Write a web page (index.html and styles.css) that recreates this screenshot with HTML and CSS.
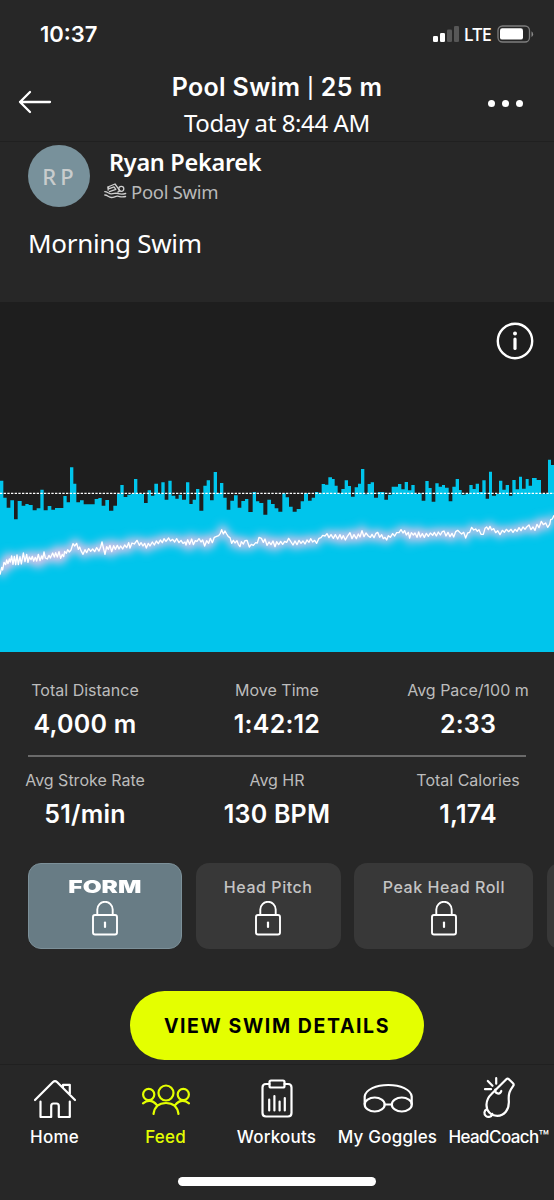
FILE: index.html
```html
<!DOCTYPE html>
<html lang="en">
<head>
    <meta charset="UTF-8">
    <meta name="viewport" content="width=device-width, initial-scale=1.0">
    <title>Pool Swim</title>
    <link rel="stylesheet" href="styles.css">
</head>
<body>
    <div class="status">
        <span class="time">10:37</span>
        <div class="signal">
            <svg width="26" height="16" viewBox="0 0 26 16">
                <rect x="0" y="10" width="5" height="6" rx="1.3" fill="#fff"/>
                <rect x="7" y="7" width="5" height="9" rx="1.3" fill="#fff"/>
                <rect x="14" y="3.5" width="5" height="12.5" rx="1.3" fill="#575757"/>
                <rect x="21" y="0" width="5" height="16" rx="1.3" fill="#575757"/>
            </svg>
            <span class="lte">LTE</span>
            <svg width="37" height="18" viewBox="0 0 37 18">
                <rect x="1" y="1" width="31.500" height="16" rx="4.5" fill="none" stroke="#7d7d7d" stroke-width="1.3"/>
                <rect x="3" y="3.2" width="23" height="11.4" rx="2.2" fill="#fff"/>
                <path d="M34.500 6.3q1.6 1 1.6 2.9t-1.6 2.9z" fill="#8a8a8a"/>
            </svg>
        </div>
    </div>

    <div class="header">
        <svg class="back" width="34" height="24" viewBox="0 0 34 24">
            <path d="M32 12H2M12 2L2 12l10 10" fill="none" stroke="#fff" stroke-width="2.3" stroke-linecap="round" stroke-linejoin="round"/>
        </svg>
        <div class="titles">
            <h1>Pool Swim <span class="bar">|</span> 25 m</h1>
            <p class="date">Today at 8:44 AM</p>
        </div>
        <div class="more"><i></i><i></i><i></i></div>
    </div>

    <div class="profile">
        <div class="user">
            <div class="avatar">RP</div>
            <div class="who">
                <div class="name">Ryan Pekarek</div>
                <div class="sport">
                    <svg width="23" height="16" viewBox="0 0 23 16" fill="none" stroke="#d0d0d0" stroke-width="1.3" stroke-linecap="round" stroke-linejoin="round">
                        <circle cx="17.3" cy="5.8" r="2.5"/>
                        <path d="M4.2 7.2L3.8 4 11 1l5 6.8-2.2 1.3M3.8 4l1.5 1.7L10 3.8l1.8 2.6-6.3 2.3"/>
                        <path d="M.8 8.6c3 0 3.6 2.3 6.6 2.3s3.3-1 5.6-.6 3.5 1.5 8.7.2"/>
                        <path d="M.8 12c3 0 3.6 2.5 6.6 2.5s3.7-1.5 6.2-1.3 3.5 1.5 8 .3"/>
                    </svg>
                    <span>Pool Swim</span>
                </div>
            </div>
        </div>
        <div class="activity">Morning Swim</div>
    </div>

    <div class="chart">
        <svg class="graph" width="554" height="350" viewBox="0 0 1662 1050">
            <defs>
                <filter id="blur" x="-5%" y="-60%" width="110%" height="220%">
                    <feGaussianBlur stdDeviation="13"/>
                </filter>
            </defs>
            <!-- pace bars -->
            <g fill="#00c5ec">
                <path transform="translate(0 444)" d="M0 606V92H10V143H20V173H31V151H42V208H53V153H65V167H76V162H86V165H98V181H110V175H121V119H131V181H143V168H154V179H165V174H190V138H200V157H210V52H220V101H229V157H240V151H251V163H284V147H295V144H305V167H316V150H327V182H340V167H351V131H361V105H371V141H382V134H392V131H402V87H412V131H422V132H432V159H443V121H453V137H463V101H474V131H484V97H494V149H505V92H515V137H526V146H536V134H546V149H556V606z"/>
                <path transform="translate(555 444)" d="M0 606V149H3V97H13V162H23V149H33V117H43V182H55V107H65V91H75V151H86V66H96V129H105V99H115V143H125V179H136V152H147V136H158V173H169V153H180V147H190V186H203V126H213V154H223V159H235V194H247V149H258V162H269V175H280V185H292V130H302V142H312V170H323V185H335V177H347V154H357V130H369V152H380V143H390V126H400V130H410V102H420V104H430V82H441V87H449V107H458V130H469V117H479V91H489V108H498V140H509V112H519V101H528V57H538V133H548V102H553V606z"/>
                <path transform="translate(1107 444)" d="M0 606V102H5V97H15V143H27V126H46V149H57V134H68V110H87V102H97V118H107V96H117V121H127V105H137V132H147V130H158V152H169V93H179V114H188V155H199V100H209V110H219V105H228V113H239V154H250V110H260V87H270V120H278V134H290V131H301V105H311V117H320V101H330V126H340V91H350V146H360V65H369V137H381V132H390V92H400V119H410V105H420V137H430V90H440V118H450V80H459V116H470V87H479V107H489V84H503V90H516V131H537V29H546V45H555V606z"/>
            </g>
            <path d="M0 574H1662" stroke="#fff" stroke-width="3.3" stroke-dasharray="7 4"/>
            <!-- heart rate -->
            <path id="hr" transform="translate(0 444)" fill="none" d="M0 374L5 352 8 360 12 337 17 344 20 330 24 341 28 327 31 336 35 318 39 343 43 319 47 344 51 315 55 344 60 320 64 342 70 309 75 335 80 313 84 337 88 321 93 329 97 319 101 333 106 322 110 333 115 313 120 332 125 318 128 327 132 306 136 324 142 327 147 316 151 324 158 309 163 321 167 308 172 321 177 305 182 325 187 313 191 320 194 304 199 310 203 299 208 306 213 300 219 281 224 288 230 280 235 298 239 291 243 302 249 313 255 299 260 308 266 296 272 304 278 297 284 305 290 293 297 303 302 291 306 276 311 297 315 313 320 290 325 298 330 286 335 305 341 287 346 298 352 286 357 297 362 288 368 297 374 285 380 293 386 278 390 294 396 279 403 282 411 271 418 286 423 278 429 288 434 280 439 294 445 280 450 288 457 276 463 285 469 273 475 281 481 270 487 278 492 266 498 274 506 264 511 273 518 268 524 276 530 266 537 278 543 271 549 280 555 276L558 285 563 269 569 283 575 267 580 284 586 272 591 274 597 266 603 276 608 270 614 288 620 272 626 280 631 265 637 278 643 262 650 259 656 257 661 250 665 239 670 252 675 243 680 252 685 260 690 263 695 280 700 271 705 279 711 272 715 283 720 290 724 275 730 282 735 272 741 271 748 291 754 283 760 286 767 278 772 279 777 262 784 265 790 277 795 267 801 286 807 276 813 284 819 273 825 290 830 275 836 284 842 274 848 283 854 274 860 277 866 265 872 274 879 285 885 273 891 284 897 271 903 280 909 273 915 282 921 270 927 277 932 266 938 276 944 271 950 280 957 265 963 263 968 256 975 258 981 251 987 263 993 254 1000 265 1006 254 1013 267 1020 254 1025 267 1030 257 1036 270 1042 259 1050 248 1056 266 1062 254 1069 266 1075 252 1080 261 1086 242 1092 260 1098 249 1105 258L1111 262 1116 253 1122 263 1128 250 1133 247 1139 262 1145 254 1150 266 1155 262 1160 270 1165 257 1171 262 1178 251 1184 258 1190 248 1197 248 1203 239 1209 249 1214 242 1219 255 1225 247 1229 264 1234 248 1240 255 1245 249 1251 262 1256 246 1261 261 1267 251 1273 262 1279 250 1285 259 1291 249 1298 256 1303 247 1309 258 1315 246 1321 255 1327 245 1332 243 1338 258 1344 247 1350 260 1356 250 1361 261 1367 245 1373 241 1379 247 1385 252 1391 247 1397 264 1403 249 1409 247 1415 232 1421 240 1427 237 1432 244 1437 239 1443 253 1450 253 1455 235 1460 231 1465 239 1470 229 1475 240 1481 236 1487 248 1493 242 1500 254 1507 241 1513 247 1519 238 1526 245 1533 238 1539 247 1545 238 1551 244 1557 233 1563 242 1569 231 1575 238 1580 231 1587 225 1593 239 1599 231 1605 241 1611 223 1617 233 1624 214 1630 224 1637 219 1643 232 1649 223 1652 209 1657 207 1662 196"/>
        </svg>
        <svg class="info" width="38" height="38" viewBox="0 0 38 38">
            <circle cx="19" cy="19" r="17.2" fill="none" stroke="#fff" stroke-width="2.4"/>
            <circle cx="19" cy="11.5" r="2" fill="#fff"/>
            <path d="M19 17v9.5" stroke="#fff" stroke-width="3.2" stroke-linecap="round"/>
        </svg>
    </div>

    <div class="stats">
        <div class="stat"><span>Total Distance</span><b>4,000 m</b></div>
        <div class="stat"><span>Move Time</span><b>1:42:12</b></div>
        <div class="stat"><span>Avg Pace/100 m</span><b>2:33</b></div>
        <div class="rule"></div>
        <div class="stat"><span>Avg Stroke Rate</span><b>51/min</b></div>
        <div class="stat"><span>Avg HR</span><b>130 BPM</b></div>
        <div class="stat"><span>Total Calories</span><b>1,174</b></div>
    </div>

    <svg width="0" height="0" class="defs">
        <symbol id="lock" viewBox="0 0 28 36">
            <path d="M6.3 14V8.5a7.700 7.700 0 0 1 15.400 0V14" fill="none" stroke="#fff" stroke-width="1.9"/>
            <rect x="2" y="14" width="24" height="19.500" rx="2" fill="none" stroke="#fff" stroke-width="1.9"/>
            <path d="M14 21.500v4.500" stroke="#fff" stroke-width="2.2" stroke-linecap="round"/>
        </symbol>
    </svg>
    <div class="cards">
        <div class="card form"><span>FORM</span><svg width="28" height="36"><use href="#lock"/></svg></div>
        <div class="card pitch"><span>Head Pitch</span><svg width="28" height="36"><use href="#lock"/></svg></div>
        <div class="card roll"><span>Peak Head Roll</span><svg width="28" height="36"><use href="#lock"/></svg></div>
        <div class="card next"></div>
    </div>

    <div class="action"><button>VIEW SWIM DETAILS</button></div>

    <div class="nav">
        <div class="item">
            <svg width="44" height="42" viewBox="0 0 44 42">
                <path d="M2 22L20 4q2-2 4 0L42 22M7.5 23.500v15.500h10.700V28q0-2.500 2.300-2.500h3q2.300 0 2.300 2.500v11h11V23.500M30 9V6.800h6.800V16"/>
            </svg>
            <span>Home</span>
        </div>
        <div class="item active">
            <svg width="50" height="42" viewBox="0 0 50 42">
                <circle cx="25" cy="15" r="7.5"/>
                <circle cx="7.7" cy="16.500" r="5.600"/>
                <circle cx="42.3" cy="16.500" r="5.600"/>
                <path d="M12.500 36C13.500 29 18 25 25 25S36.500 29 37.500 36M2 25.300q7.500-6 14 2M48 25.300q-7.500-6-14 2"/>
            </svg>
            <span>Feed</span>
        </div>
        <div class="item">
            <svg width="34" height="42" viewBox="0 0 34 42">
                <path d="M9.5 6H6q-3.500 0-3.500 3.500v25.500q0 3.500 3.500 3.500h22q3.500 0 3.500-3.500V9.500q0-3.500-3.500-3.500h-3.500"/>
                <rect x="9.500" y="2.500" width="15" height="7" rx="1.500"/>
                <path d="M9.200 21.500v11M14.400 18v14.500M19.600 23.500v9M24.800 20v12.500"/>
            </svg>
            <span>Workouts</span>
        </div>
        <div class="item">
            <svg width="52" height="42" viewBox="0 0 52 42">
                <path d="M2.700 26V18.500C3.700 11.500 14 7 26.300 7s22.500 4.500 23.400 11.500V26"/>
                <ellipse cx="12.700" cy="26.500" rx="10" ry="7"/>
                <ellipse cx="39.800" cy="26.500" rx="10" ry="7"/>
                <path d="M22.700 26.500h7"/>
            </svg>
            <span>My Goggles</span>
        </div>
        <div class="item coach">
            <svg width="34" height="44" viewBox="0 0 34 44">
                <path d="M24.300 2.300q1.300-1.300 2.600 0L31 6.300q1.200 1.200.2 2.600C27.500 14 26.300 17 26.800 23.500 27.500 33 22 38.800 15.300 38.800 8.500 38.800 4.300 34 4.500 27.500c.2-5 2.300-8 5-10.500z"/>
                <path d="M13.300 12.500c-.8 4.500 4.800 5.500 6 1.500M4.700 32.300a4 4 0 1 0 5.600 4.600"/>
                <path d="M14.200 1.200v5.500M5.800 4l4.700 4.800M3 12.200h6"/>
            </svg>
            <span>HeadCoach™</span>
        </div>
    </div>
    <div class="homebar"></div>

    <script>
        // soft glow under the heart rate line
        var hr = document.getElementById("hr");
        var glow = hr.cloneNode();
        glow.removeAttribute("id");
        glow.setAttribute("class", "glow");
        hr.parentNode.insertBefore(glow, hr);
    </script>
</body>
</html>
```
FILE: styles.css
```css
*{
    padding: 0;
    margin: 0;
    box-sizing: border-box;
}
body{
    width: 554px;
    height: 1200px;
    overflow: hidden;
    background-color: #272727;
    color: #fff;
    font-family: Inter, "Liberation Sans", sans-serif;
}
svg{
    display: block;
}
.defs{
    position: absolute;
}
/* status bar */
.status{
    height: 68px;
    padding: 0 20px 0 40px;
    display: flex;
    justify-content: space-between;
    align-items: center;
}
.time{
    font-size: 22px;
    font-weight: 600;
}
.signal{
    display: flex;
    align-items: center;
}
.lte{
    font: 500 18px "Noto Sans", sans-serif;
    letter-spacing: -0.7px;
    margin: 0 6px 0 5px;
}
/* header */
.header{
    height: 74px;
    padding: 0 31px 0 18px;
    display: grid;
    grid-template-columns: 88px 342px 75px;
    border-bottom: 1px solid #202020;
}
.back{
    margin-top: 22px;
}
.titles{
    text-align: center;
}
h1{
    font-size: 25px;
    line-height: 38px;
    font-weight: 600;
    letter-spacing: 0.35px;
}
.bar{
    font-size: 20px;
    font-weight: 500;
    vertical-align: 1px;
}
.date{
    font: 24px/32px "Noto Sans", sans-serif;
    letter-spacing: -0.4px;
}
.more{
    display: flex;
    justify-content: flex-end;
    gap: 7px;
    padding-top: 32px;
}
.more i{
    width: 7px;
    height: 7px;
    border-radius: 50%;
    background-color: #fff;
}
/* profile */
.profile{
    height: 160px;
    padding: 3px 28px;
    font-family: "Noto Sans", sans-serif;
}
.user{
    display: flex;
}
.avatar{
    width: 62px;
    height: 62px;
    border-radius: 50%;
    background-color: #78919b;
    color: #c8cccd;
    font-size: 22px;
    line-height: 62px;
    font-weight: 500;
    letter-spacing: 4px;
    text-indent: 2px;
    text-align: center;
}
.who{
    padding-left: 14px;
}
.name{
    padding-left: 5px;
    font-size: 23.5px;
    line-height: 34px;
    font-weight: 600;
    letter-spacing: -0.3px;
}
.sport{
    display: flex;
    align-items: center;
    gap: 4px;
    height: 24px;
    color: #b9b9b9;
    font-size: 18.5px;
    letter-spacing: -0.3px;
}
.activity{
    margin-top: 18px;
    font-size: 26px;
    line-height: 36px;
    letter-spacing: -0.3px;
}
/* chart */
.chart{
    position: relative;
    height: 350px;
    background-color: #1e1e1e;
}
#hr{
    stroke: #fff;
    stroke-width: 4;
    stroke-linejoin: round;
}
.glow{
    stroke: #e3c4ea;
    stroke-width: 15;
    filter: url(#blur);
}
.info{
    position: absolute;
    right: 20px;
    top: 20px;
}
/* stats */
.stats{
    height: 211px;
    padding-top: 27px;
    display: grid;
    grid-template-columns: 170px 214px 168px;
    align-content: start;
}
.stat{
    text-align: center;
    white-space: nowrap;
}
.stat span{
    display: block;
    font-size: 16px;
    line-height: 22px;
    color: #bcbcbc;
}
.stat b{
    display: block;
    font-size: 25px;
    line-height: 46px;
    font-weight: 600;
    letter-spacing: 0.2px;
}
.rule{
    grid-column: 1 / -1;
    height: 2px;
    margin: 8px 0 12px 28px;
    width: 498px;
    background-color: #6a6a6a;
}
/* locked cards */
.cards{
    display: flex;
    gap: 13.7px;
    padding-left: 28px;
    overflow: hidden;
}
.card{
    height: 86px;
    border-radius: 13px;
    background-color: #383838;
    display: flex;
    flex-direction: column;
    flex-shrink: 0;
    align-items: center;
    padding-top: 14px;
}
.card span{
    font-size: 16px;
    line-height: 20px;
    font-weight: 500;
    color: #c4c4c4;
    margin-bottom: 4px;
    letter-spacing: 0.55px;
}
.form{
    width: 154px;
    background-color: #687c85;
    border: 1px solid #7c9099;
    padding-top: 13px;
}
.card.form span{
    color: #fff;
    font-size: 18px;
    font-weight: 900;
    letter-spacing: 0;
    transform: scaleX(1.36);
}
.pitch{
    width: 145px;
}
.roll{
    width: 179px;
}
/* runs off the right side */
.next{
    width: 40px;
    margin-right: -40px;
}
/* button */
.action{
    height: 116px;
    padding-top: 42px;
    text-align: center;
    border-bottom: 1px solid #202020;
}
button{
    width: 294px;
    height: 69px;
    border: 0;
    border-radius: 35px;
    background-color: #e4ff00;
    color: #000;
    font: 700 19.5px Inter, sans-serif;
    letter-spacing: 1.6px;
}
/* bottom nav */
.nav{
    display: flex;
    margin-left: -1px;
    padding-top: 12px;
    height: 112px;
}
.item{
    width: 111px;
    display: flex;
    flex-direction: column;
    align-items: center;
    white-space: nowrap;
}
.item svg{
    height: 44px;
    fill: none;
    stroke: #fff;
    stroke-width: 2.2;
    stroke-linecap: round;
    stroke-linejoin: round;
}
.item span{
    margin-top: 4px;
    font-size: 17px;
    line-height: 24px;
    font-weight: 500;
    letter-spacing: 0.2px;
}
.item.coach span{
    letter-spacing: -0.6px;
}
.active{
    color: #e4ff00;
}
.item.active svg{
    stroke: #e4ff00;
}
.homebar{
    width: 198px;
    height: 9px;
    margin: 0 auto;
    border-radius: 5px;
    background-color: #fff;
}
```
